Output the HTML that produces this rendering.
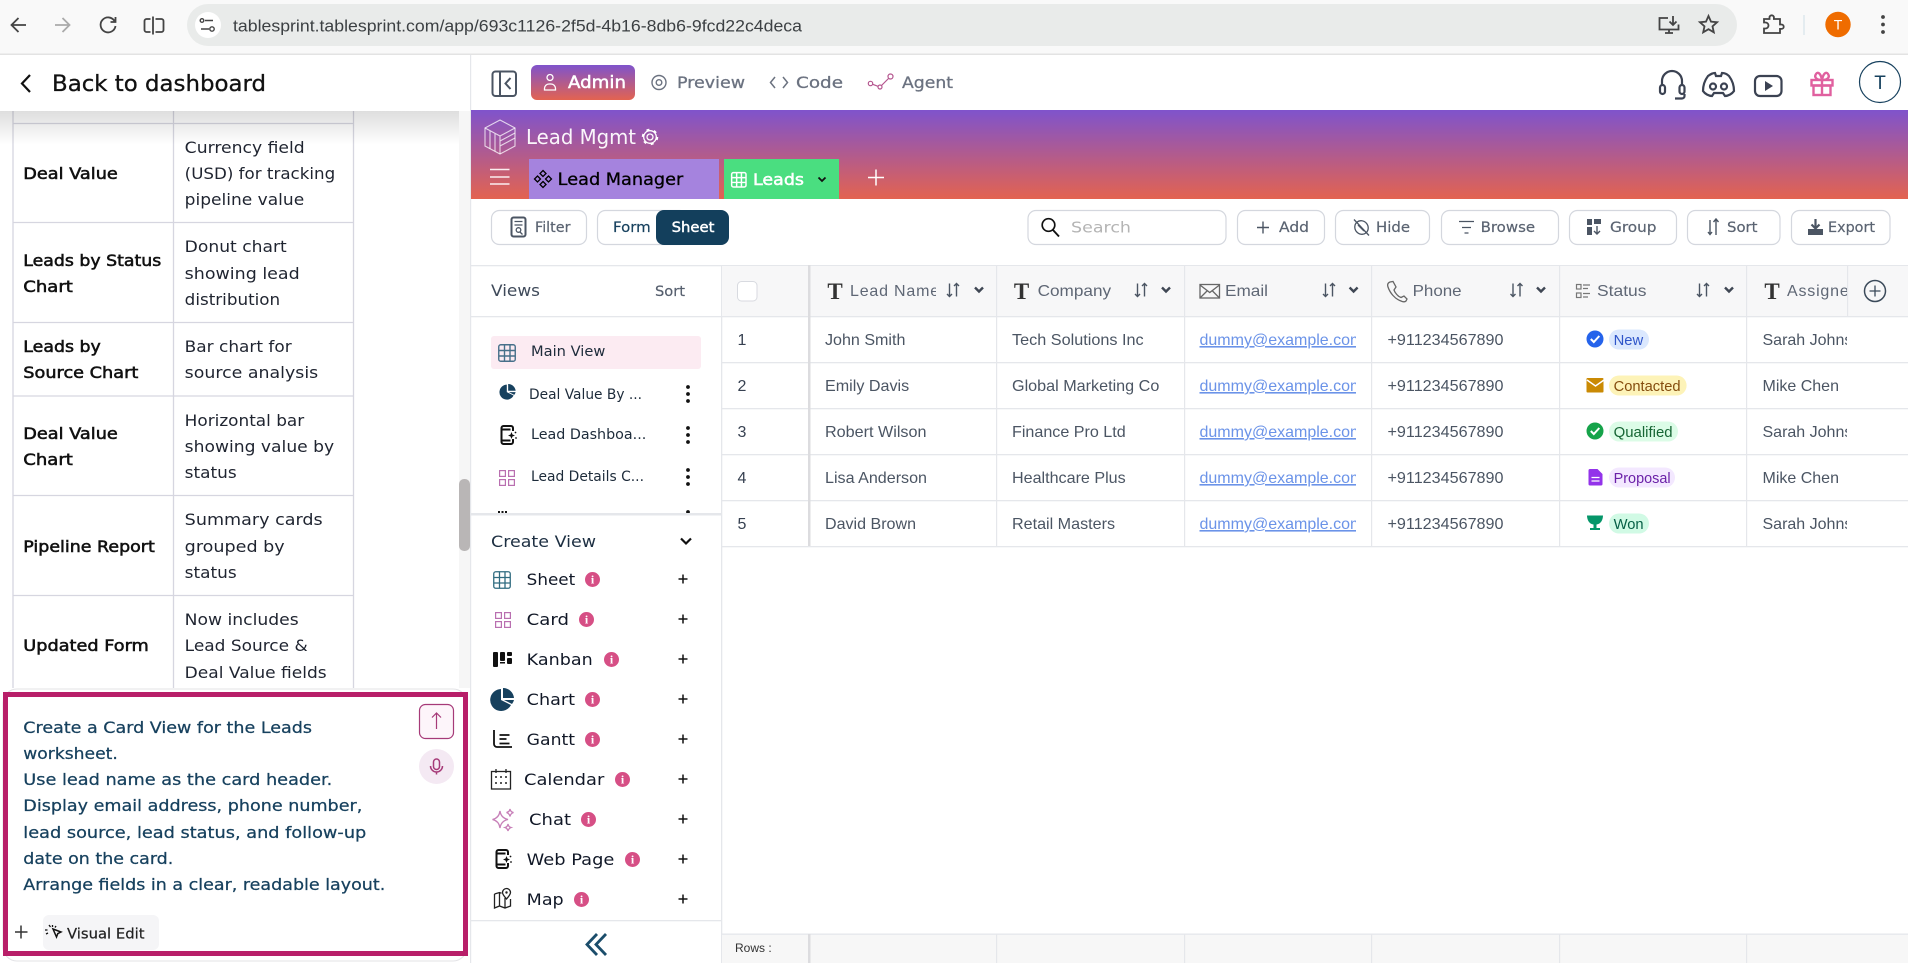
<!DOCTYPE html>
<html lang="en"><head><meta charset="utf-8"><title>Lead Mgmt</title>
<style>
html,body{margin:0;padding:0;background:#fff;width:1908px;height:963px;overflow:hidden}
svg{display:block}
text{white-space:pre}
.p{font-family:"DejaVu Sans",sans-serif;font-size:16px;fill:#1f2430}
.b{font-family:"DejaVu Sans",sans-serif;font-size:16px;fill:#111;stroke:#111;stroke-width:.55}
.q{font-family:"DejaVu Sans",sans-serif;font-size:16px;fill:#17415e;stroke:#17415e;stroke-width:.25}
.n{font-family:"DejaVu Sans",sans-serif;font-size:16px;fill:#6b7280;stroke:#6b7280;stroke-width:.3}
.t{font-family:"DejaVu Sans",sans-serif;font-size:14px;fill:#5b6472;stroke:#5b6472;stroke-width:.2}
.v{font-family:"DejaVu Sans",sans-serif;font-size:14px;fill:#1d2b3a}
.c{font-family:"DejaVu Sans",sans-serif;font-size:16px;fill:#111827}
.g{font-family:"Liberation Sans",sans-serif;font-size:16px;fill:#4b5563}
.h{font-family:"Liberation Sans",sans-serif;font-size:16px;fill:#5f6775;letter-spacing:.8px}
.T{font-family:"Liberation Serif",serif;font-size:23px;font-weight:bold;fill:#333;text-anchor:middle}
.l{font-family:"Liberation Sans",sans-serif;font-size:16px;fill:#6b93e8;text-decoration:underline}
.s{font-family:"Liberation Sans",sans-serif;font-size:14.5px}
.i{font-family:"Liberation Serif",serif;font-size:12px;font-weight:bold;fill:#fff;text-anchor:middle}
</style></head><body>
<svg xmlns="http://www.w3.org/2000/svg" width="1908" height="963" viewBox="0 0 1908 963">
<defs>
<linearGradient id="gr" x1="0" y1="0" x2="0" y2="1"><stop offset="0" stop-color="#7f53cc"/><stop offset="1" stop-color="#e36350"/></linearGradient>
<linearGradient id="sh" x1="0" y1="0" x2="0" y2="1"><stop offset="0" stop-color="#000" stop-opacity=".13"/><stop offset="1" stop-color="#000" stop-opacity="0"/></linearGradient>
<clipPath id="c1"><rect x="840" y="270" width="96" height="40"/></clipPath>
<clipPath id="c2"><rect x="1755" y="270" width="92" height="280"/></clipPath>
<clipPath id="c3"><rect x="1195" y="320" width="161" height="220"/></clipPath>
<clipPath id="c4"><rect x="472" y="500" width="248" height="13"/></clipPath>
<g id="grid" fill="none"><rect x=".75" y=".75" width="16.5" height="16.5" rx="2"/><path d="M6.5 1v16M12 1v16M1 6.5h16M1 12h16"/></g>
<g id="card" fill="none"><rect x=".6" y=".6" width="5.8" height="5.8"/><rect x="9.6" y=".6" width="5.8" height="5.8"/><rect x=".6" y="9.6" width="5.8" height="5.8"/><rect x="9.6" y="9.6" width="5.8" height="5.8"/></g>
<g id="pie"><path d="M10 12V1A11 11 0 1 0 20 17Z"/><path d="M12 0A11 11 0 0 1 23 10H12Z"/><path d="M13 12H23A11 11 0 0 1 21 16Z"/></g>
<g id="web"><path d="M12.5 6V3a2 2 0 0 0-2-2H3a2 2 0 0 0-2 2v14a2 2 0 0 0 2 2h7.5a2 2 0 0 0 2-2v-3M1 4.500h9M1 15.500h9" fill="none" stroke="#111" stroke-width="2"/><path d="M11 7l1 2.500 2.500 1-2.500 1-1 2.500-1-2.500-2.500-1 2.500-1z" fill="#111"/><circle cx="15" cy="7.500" r=".9" fill="#111"/><circle cx="15.500" cy="13" r=".9" fill="#111"/></g>
<g id="sa" fill="none" stroke="#4b5563" stroke-width="1.4"><path d="M-3.500 -6.500V6.500M-6 4l2.500 2.500L-1 4M3.500 6.500V-6.500M1 -4l2.500-2.500L6-4"/></g>
<path id="ch" d="M-4 -2.500L0 1.500L4 -2.500" fill="none" stroke="#3f4754" stroke-width="2.400"/>
<g id="dots" fill="#111"><circle cy="-7" r="1.900"/><circle r="1.900"/><circle cy="7" r="1.900"/></g>
<path id="pl" d="M-4.500 0H4.500M0 -4.500V4.500" stroke="#111" stroke-width="1.500" fill="none"/>
</defs>

<!-- browser bar -->
<rect width="1908" height="54" fill="#f9f9f9"/>
<rect y="53.500" width="1908" height="1.500" fill="#e3e3e3"/>
<rect x="187" y="4" width="1550" height="42" rx="21" fill="#e9ebea"/>
<circle cx="208" cy="25" r="13" fill="#fff"/>
<g fill="none" stroke="#444" stroke-width="1.800">
<path d="M26 25H12M18.500 18l-7 7 7 7"/>
<path d="M55 25H69M62.500 18l7 7-7 7" stroke="#aaa"/>
<path d="M114.500 21A7.500 7.500 0 1 0 115.500 26M115.500 17v5h-5"/>
<path d="M150.500 19h-4a2 2 0 0 0-2 2v9a2 2 0 0 0 2 2h4M153 16.500v18M155.500 19h6a2 2 0 0 1 2 2v9a2 2 0 0 1-2 2h-6" />
<path d="M1668 18h-8.500v11.500h19v-5M1665 33h8M1669 29.500V33M1673 16v9M1669.500 21.500l3.500 3.500 3.500-3.500"/>
<polygon points="1708.500,16 1711,21.600 1717.100,22.200 1712.500,26.300 1713.800,32.300 1708.500,29.200 1703.200,32.300 1704.500,26.300 1699.900,22.200 1706,21.600"/>
<path d="M1764 19h5.500v-1.500a2.200 2.200 0 0 1 4.400 0V19H1780v5.500h1.500a2.200 2.200 0 0 1 0 4.400H1780V33h-16v-4.500h1.500a3 3 0 0 0 0-6H1764z"/>
<path d="M205 20.500h8M201 29h8" stroke-width="1.500"/>
<circle cx="202" cy="20.500" r="1.800" stroke-width="1.400"/><circle cx="212" cy="29" r="2.200" stroke-width="1.400"/>
</g>
<rect x="1803.500" y="15" width="1" height="20" fill="#cfe0e8"/>
<circle cx="1838" cy="24.500" r="12.700" fill="#ef6c00"/>
<text x="1838" y="29.500" font-family="Liberation Sans" font-size="14" fill="#fff" text-anchor="middle">T</text>
<g fill="#444"><circle cx="1883" cy="17" r="1.900"/><circle cx="1883" cy="24.500" r="1.900"/><circle cx="1883" cy="32" r="1.900"/></g>
<text x="233" y="31.500" font-family="Liberation Sans" font-size="16.500" fill="#3c4043" textLength="569" lengthAdjust="spacingAndGlyphs">tablesprint.tablesprint.com/app/693c1126-2f5d-4b16-8db6-9fcd22c4deca</text>

<!-- left panel table -->
<rect x="459" y="111" width="11" height="577" fill="#f6f6f6"/>
<rect x="459" y="479" width="11" height="72" rx="5" fill="#b9b6b6"/>
<g stroke="#d6d6e0" stroke-width="1.300" fill="none">
<path d="M13 111V688M173.500 111V688M353.500 111V688"/>
<path d="M13 123.500H353.500M13 222.500H353.500M13 322.500H353.500M13 396H353.500M13 495.500H353.500M13 595.500H353.500"/>
</g>
<rect x="0" y="111" width="459" height="34" fill="url(#sh)"/>
<rect x="470" y="55" width="1.200" height="908" fill="#e5e7eb"/>

<text class="b" x="23.300" y="179" textLength="94.500" lengthAdjust="spacingAndGlyphs">Deal Value</text>
<text class="b" x="23.300" y="266" textLength="138" lengthAdjust="spacingAndGlyphs">Leads by Status</text>
<text class="b" x="23.300" y="292" textLength="49.500" lengthAdjust="spacingAndGlyphs">Chart</text>
<text class="b" x="23.300" y="352" textLength="77.500" lengthAdjust="spacingAndGlyphs">Leads by</text>
<text class="b" x="23.300" y="378" textLength="115" lengthAdjust="spacingAndGlyphs">Source Chart</text>
<text class="b" x="23.300" y="439" textLength="94.500" lengthAdjust="spacingAndGlyphs">Deal Value</text>
<text class="b" x="23.300" y="465" textLength="49.500" lengthAdjust="spacingAndGlyphs">Chart</text>
<text class="b" x="23.300" y="552" textLength="131.500" lengthAdjust="spacingAndGlyphs">Pipeline Report</text>
<text class="b" x="23.300" y="651" textLength="125.500" lengthAdjust="spacingAndGlyphs">Updated Form</text>

<text class="p" x="184.700" y="153" textLength="120" lengthAdjust="spacingAndGlyphs">Currency field</text>
<text class="p" x="184.700" y="179" textLength="150.500" lengthAdjust="spacingAndGlyphs">(USD) for tracking</text>
<text class="p" x="184.700" y="205" textLength="119.500" lengthAdjust="spacingAndGlyphs">pipeline value</text>
<text class="p" x="184.700" y="252" textLength="102" lengthAdjust="spacingAndGlyphs">Donut chart</text>
<text class="p" x="184.700" y="279" textLength="115" lengthAdjust="spacingAndGlyphs">showing lead</text>
<text class="p" x="184.700" y="305" textLength="95.500" lengthAdjust="spacingAndGlyphs">distribution</text>
<text class="p" x="184.700" y="352" textLength="107" lengthAdjust="spacingAndGlyphs">Bar chart for</text>
<text class="p" x="184.700" y="378" textLength="133.500" lengthAdjust="spacingAndGlyphs">source analysis</text>
<text class="p" x="184.700" y="426" textLength="119.500" lengthAdjust="spacingAndGlyphs">Horizontal bar</text>
<text class="p" x="184.700" y="452" textLength="149.500" lengthAdjust="spacingAndGlyphs">showing value by</text>
<text class="p" x="184.700" y="478" textLength="52" lengthAdjust="spacingAndGlyphs">status</text>
<text class="p" x="184.700" y="525" textLength="138" lengthAdjust="spacingAndGlyphs">Summary cards</text>
<text class="p" x="184.700" y="552" textLength="100" lengthAdjust="spacingAndGlyphs">grouped by</text>
<text class="p" x="184.700" y="578" textLength="52" lengthAdjust="spacingAndGlyphs">status</text>
<text class="p" x="184.700" y="625" textLength="114" lengthAdjust="spacingAndGlyphs">Now includes</text>
<text class="p" x="184.700" y="651" textLength="123" lengthAdjust="spacingAndGlyphs">Lead Source &amp;</text>
<text class="p" x="184.700" y="678" textLength="142" lengthAdjust="spacingAndGlyphs">Deal Value fields</text>

<!-- back header -->
<rect x="0" y="55" width="470" height="56" fill="#fff"/>
<path d="M30 75L22 83.500L30 92" fill="none" stroke="#111" stroke-width="2.200"/>
<text x="52" y="91" font-family="DejaVu Sans" font-size="22.500" fill="#111" textLength="214" lengthAdjust="spacingAndGlyphs" stroke="#111" stroke-width=".3">Back to dashboard</text>

<!-- prompt -->
<rect x="3" y="689" width="464" height="272" rx="14" fill="#fff" stroke="#e3e3e6"/>
<rect x="5.500" y="694.500" width="460" height="259" fill="#fff" stroke="#b81f69" stroke-width="5"/>
<text class="q" x="23.300" y="733" textLength="288.700" lengthAdjust="spacingAndGlyphs">Create a Card View for the Leads</text>
<text class="q" x="23.300" y="759" textLength="94.500" lengthAdjust="spacingAndGlyphs">worksheet.</text>
<text class="q" x="23.300" y="785" textLength="309" lengthAdjust="spacingAndGlyphs">Use lead name as the card header.</text>
<text class="q" x="23.300" y="811" textLength="339" lengthAdjust="spacingAndGlyphs">Display email address, phone number,</text>
<text class="q" x="23.300" y="838" textLength="343" lengthAdjust="spacingAndGlyphs">lead source, lead status, and follow-up</text>
<text class="q" x="23.300" y="864" textLength="150" lengthAdjust="spacingAndGlyphs">date on the card.</text>
<text class="q" x="23.300" y="890" textLength="362" lengthAdjust="spacingAndGlyphs">Arrange fields in a clear, readable layout.</text>
<rect x="419.500" y="704.500" width="34" height="34" rx="6" fill="#fdf5fa" stroke="#a63a78" stroke-width="1.200"/>
<path d="M436.500 729V713M432 717.500l4.500-4.500 4.500 4.500" fill="none" stroke="#a63a78" stroke-width="1.200"/>
<circle cx="436.500" cy="766.500" r="17.500" fill="#f4e9f3"/>
<rect x="433.500" y="759" width="6" height="10.500" rx="3" fill="none" stroke="#a63a78" stroke-width="1.500"/>
<path d="M430.500 766a6 6 0 0 0 12 0M436.500 772v2.500" fill="none" stroke="#a63a78" stroke-width="1.500"/>
<path d="M15 932H27.500M21 925.500V938.500" stroke="#333" stroke-width="1.500" fill="none"/>
<rect x="43" y="915" width="116" height="35" rx="6" fill="#f5f5f7"/>
<path d="M53 929l8 3-3.200 1.600L56.500 937z" fill="none" stroke="#111" stroke-width="1.500"/>
<path d="M49 925l1.500 2M45 930h2.500M52.500 925v2M46 934l2-1M56 926l-1 1.500" stroke="#111" stroke-width="1.300"/>
<text x="67" y="938.500" font-family="DejaVu Sans" font-size="14" fill="#222" textLength="77.500" lengthAdjust="spacingAndGlyphs" stroke="#222" stroke-width=".2">Visual Edit</text>

<!-- top nav -->
<rect x="492.500" y="71.500" width="23.500" height="24.500" rx="3" fill="none" stroke="#4b5563" stroke-width="2"/>
<path d="M500 72V96M510.500 78l-5 5.500 5 5.500" fill="none" stroke="#4b5563" stroke-width="2"/>
<rect x="531" y="65" width="104" height="35" rx="6" fill="url(#gr)"/>
<circle cx="550" cy="77.500" r="3" fill="none" stroke="#fff" stroke-width="1.300"/>
<path d="M544.500 90v-1.500a4.500 4.500 0 0 1 4.500-4.500h2a4.500 4.500 0 0 1 4.500 4.500V90z" fill="none" stroke="#fff" stroke-width="1.300"/>
<text x="568" y="88" font-family="DejaVu Sans" font-size="17" fill="#fff" stroke="#fff" stroke-width=".5" textLength="58" lengthAdjust="spacingAndGlyphs">Admin</text>
<circle cx="659" cy="82.500" r="7" fill="none" stroke="#6b7280" stroke-width="1.400"/><circle cx="659" cy="82.500" r="2.800" fill="none" stroke="#6b7280" stroke-width="1.400"/>
<text class="n" x="677" y="88" textLength="68" lengthAdjust="spacingAndGlyphs">Preview</text>
<path d="M775 77l-4.500 5.500 4.500 5.500M783 77l4.500 5.500-4.500 5.500" fill="none" stroke="#6b7280" stroke-width="1.500"/>
<text class="n" x="796" y="88" textLength="47" lengthAdjust="spacingAndGlyphs">Code</text>
<g fill="none" stroke="#b5568f" stroke-width="1.200"><circle cx="870.500" cy="83.500" r="2.200"/><circle cx="880" cy="87" r="2"/><circle cx="890.500" cy="76.500" r="2.500"/><path d="M872.700 84.300L878 86.300M881.500 85.500L888.500 78.500"/></g>
<text class="n" x="902" y="88" textLength="51" lengthAdjust="spacingAndGlyphs">Agent</text>

<g fill="none" stroke="#3b4252" stroke-width="2.200">
<path d="M1662 86v-5a10 10 0 0 1 20 0v5"/><rect x="1660" y="85" width="5" height="9" rx="2.500"/><rect x="1679.500" y="85" width="5" height="9" rx="2.500"/><path d="M1684.500 94v2a2.500 2.500 0 0 1-2.500 2.500h-7"/>
<path d="M1708 76Q1712 73 1715 73L1716 76H1721L1722 73Q1726 73 1729 76C1732 80 1734 85 1734 91C1732 94 1728 96 1725 96L1723 93H1714L1712 96C1709 96 1705 94 1703 91C1703 85 1705 80 1708 76Z"/>
<circle cx="1713" cy="86.500" r="3"/><circle cx="1724" cy="86.500" r="3"/>
<rect x="1755" y="76" width="26.500" height="20" rx="5"/>
</g>
<path d="M1765 81l8 5-8 5z" fill="#3b4252"/>
<g fill="none" stroke="#e0609f" stroke-width="2.400"><rect x="1811.500" y="80" width="21" height="5.500"/><rect x="1813.500" y="85.500" width="17" height="9.500"/><path d="M1822 80V95M1822 80c-6 0-8-3-6-6s5 0 6 6c1-6 4-9 6-6s0 6-6 6"/></g>
<circle cx="1880" cy="82" r="20.500" fill="#fff" stroke="#17415e" stroke-width="1.200"/>
<text x="1880" y="89" font-family="Liberation Sans" font-size="19" fill="#17415e" text-anchor="middle">T</text>

<!-- banner -->
<rect x="471" y="110" width="1437" height="89" fill="url(#gr)"/>
<g fill="none" stroke="#fff" stroke-opacity=".75" stroke-width="1.100"><path d="M500 120L515 128V146L500 154L485 146V128Z"/><path d="M485 128L500 136L515 128M500 136V154M490 131V149M495 133.500V151.500M500 146L515 138M500 141L515 133"/></g>
<text x="526" y="144" font-family="DejaVu Sans" font-size="20" fill="#fff" fill-opacity=".95" textLength="110" lengthAdjust="spacingAndGlyphs">Lead Mgmt</text>
<circle cx="650" cy="137" r="3" fill="none" stroke="#fff" stroke-width="1.300"/>
<circle cx="650" cy="137" r="6.300" fill="none" stroke="#fff" stroke-width="1.300"/>
<circle cx="650" cy="137" r="7.400" fill="none" stroke="#fff" stroke-width="1.700" stroke-dasharray="3 4.750"/>
<path d="M490 169.500H509.500M490 177H509.500M490 184H509.500" stroke="#fbeef0" stroke-width="1.600"/>
<rect x="529" y="159" width="190" height="40" fill="#a583de"/>
<path d="M543 170.500l3 3-3 3-3-3zM537.500 176l3 3-3 3-3-3zM548.500 176l3 3-3 3-3-3zM543 181.500l3 3-3 3-3-3z" fill="none" stroke="#000" stroke-width="1.300"/>
<text x="557.700" y="185" font-family="DejaVu Sans" font-size="17" fill="#000" stroke="#000" stroke-width=".3" textLength="125.600" lengthAdjust="spacingAndGlyphs">Lead Manager</text>
<rect x="724" y="159" width="115" height="40" fill="#4ade80"/>
<use href="#grid" transform="translate(731 172) scale(.87)" stroke="#fff" stroke-width="1.700"/>
<text x="753" y="185" font-family="DejaVu Sans" font-size="16" fill="#fff" stroke="#fff" stroke-width=".5" textLength="51" lengthAdjust="spacingAndGlyphs">Leads</text>
<path d="M818.500 177.500l3.500 3.500 3.500-3.500" fill="none" stroke="#111" stroke-width="1.800"/>
<path d="M868 177.500H884M876 169.500V185.500" stroke="#fff" stroke-width="1.500"/>

<!-- toolbar -->
<g fill="#fff" stroke="#d4d7de" stroke-width="1.200">
<rect x="491.500" y="210.500" width="95" height="34" rx="8"/>
<rect x="597.500" y="210.500" width="90" height="34" rx="8"/>
<rect x="1028" y="210.500" width="198" height="34" rx="8"/>
<rect x="1237.500" y="210.500" width="87" height="34" rx="8"/>
<rect x="1335.500" y="210.500" width="94" height="34" rx="8"/>
<rect x="1441.500" y="210.500" width="117" height="34" rx="8"/>
<rect x="1569.500" y="210.500" width="107" height="34" rx="8"/>
<rect x="1687.500" y="210.500" width="92.500" height="34" rx="8"/>
<rect x="1791.500" y="210.500" width="98.500" height="34" rx="8"/>
</g>
<rect x="656" y="210" width="73" height="35" rx="8" fill="#133f5c"/>
<rect x="511.500" y="217.500" width="14" height="19" rx="2" fill="none" stroke="#4b5563" stroke-width="2"/>
<path d="M514.500 221.500h8M514.500 225h8" stroke="#4b5563" stroke-width="1.300"/><circle cx="518.500" cy="230" r="2.300" fill="none" stroke="#4b5563" stroke-width="1.300"/><path d="M520 232l2.500 2.500" stroke="#4b5563" stroke-width="1.300"/>
<text class="t" x="535" y="232" textLength="35.500" lengthAdjust="spacingAndGlyphs">Filter</text>
<text class="t" x="613" y="232" style="fill:#17415e;stroke:#17415e" textLength="37.700" lengthAdjust="spacingAndGlyphs">Form</text>
<text x="671.700" y="232" font-family="DejaVu Sans" font-size="14" fill="#fff" stroke="#fff" stroke-width=".4" textLength="42.700" lengthAdjust="spacingAndGlyphs">Sheet</text>
<circle cx="1048.500" cy="225" r="6.300" fill="none" stroke="#111" stroke-width="1.700"/><path d="M1053 230l6 6.500" stroke="#111" stroke-width="1.900"/>
<text x="1071" y="232.500" font-family="DejaVu Sans" font-size="15" fill="#b4b4b4" textLength="60" lengthAdjust="spacingAndGlyphs">Search</text>
<path d="M1257 227.500H1269M1263 221.500V233.500" stroke="#4b5563" stroke-width="1.400"/>
<text class="t" x="1279" y="232" textLength="30" lengthAdjust="spacingAndGlyphs">Add</text>
<g fill="none" stroke="#4b5563" stroke-width="1.300"><ellipse cx="1361.500" cy="227.500" rx="6.500" ry="7" transform="rotate(-40 1361.500 227.500)"/><path d="M1354 219.500L1369 235.500M1358 225l6 6"/></g>
<text class="t" x="1376" y="232" textLength="34" lengthAdjust="spacingAndGlyphs">Hide</text>
<path d="M1459 221.500h15M1462 227.500h9M1464.500 233h4" stroke="#4b5563" stroke-width="1.300"/>
<text class="t" x="1480.600" y="232" textLength="54.500" lengthAdjust="spacingAndGlyphs">Browse</text>
<g fill="#4b5563"><rect x="1587" y="219" width="5" height="6"/><rect x="1587" y="227" width="5" height="8"/><rect x="1594" y="219" width="7" height="5"/></g><path d="M1597 226v8M1594 231l3 3 3-3" fill="none" stroke="#4b5563" stroke-width="1.400"/>
<text class="t" x="1610" y="232" textLength="46.500" lengthAdjust="spacingAndGlyphs">Group</text>
<path d="M1710 220v14.500M1708 232l2 2.500 2-2.500M1716 235V219M1713.500 222l2.500-3 2.500 3" fill="none" stroke="#4b5563" stroke-width="1.400"/>
<text class="t" x="1727" y="232" textLength="30.500" lengthAdjust="spacingAndGlyphs">Sort</text>
<rect x="1808" y="229" width="15" height="6" fill="#4b5563"/><path d="M1815.500 219v9M1811.500 224.500l4 4 4-4" fill="none" stroke="#4b5563" stroke-width="2.200"/>
<text class="t" x="1828" y="232" textLength="47" lengthAdjust="spacingAndGlyphs">Export</text>

<!-- views panel -->
<rect x="471" y="265" width="1437" height="1.300" fill="#e5e7eb"/>
<rect x="471" y="316" width="250" height="1.300" fill="#e5e7eb"/>
<rect x="721" y="265" width="1.300" height="698" fill="#e5e7eb"/>
<text x="491" y="296" font-family="DejaVu Sans" font-size="16" fill="#3f4a5a" textLength="49" lengthAdjust="spacingAndGlyphs">Views</text>
<text x="655" y="296" font-family="DejaVu Sans" font-size="14" fill="#565f6e" stroke="#565f6e" stroke-width=".2" textLength="30" lengthAdjust="spacingAndGlyphs">Sort</text>
<rect x="491" y="336" width="210" height="33" rx="3" fill="#fcebf2"/>
<use href="#grid" transform="translate(498 344)" stroke="#47708a" stroke-width="1.400"/>
<text class="v" x="531" y="356" textLength="74.300" lengthAdjust="spacingAndGlyphs">Main View</text>
<use href="#pie" transform="translate(500 384) scale(.68)" fill="#17415e"/>
<text class="v" x="529" y="399" textLength="113" lengthAdjust="spacingAndGlyphs">Deal Value By ...</text>
<use href="#dots" transform="translate(688 394)"/>
<use href="#web" transform="translate(500.500 425)"/>
<text class="v" x="531" y="439" textLength="115.300" lengthAdjust="spacingAndGlyphs">Lead Dashboa...</text>
<use href="#dots" transform="translate(688 435)"/>
<use href="#card" transform="translate(499 470)" stroke="#b96fb0" stroke-width="1.200"/>
<text class="v" x="531" y="481" textLength="113" lengthAdjust="spacingAndGlyphs">Lead Details C...</text>
<use href="#dots" transform="translate(688 477)"/>
<g clip-path="url(#c4)"><path d="M498 512h10" stroke="#111" stroke-width="2" stroke-dasharray="2 1.500"/><circle cx="688" cy="512" r="1.900" fill="#111"/></g>
<rect x="471" y="513" width="250" height="2.500" fill="#e5e7eb"/>
<text class="c" x="491" y="547" style="fill:#1d2f42" textLength="105" lengthAdjust="spacingAndGlyphs">Create View</text>
<path d="M681 538.500l5 5 5-5" fill="none" stroke="#111" stroke-width="2.200"/>

<use href="#grid" transform="translate(493 571)" stroke="#2f6b80" stroke-width="1.300"/>
<text class="c" x="526.700" y="585" textLength="48.500" lengthAdjust="spacingAndGlyphs">Sheet</text>
<use href="#card" transform="translate(495 612)" stroke="#b96fb0" stroke-width="1.200"/>
<text class="c" x="526.700" y="625" textLength="42.300" lengthAdjust="spacingAndGlyphs">Card</text>
<g fill="#111"><rect x="493" y="652" width="5" height="15" rx="1"/><rect x="500" y="652" width="5" height="9" rx="1"/><rect x="507" y="652" width="5" height="4" rx="1"/><rect x="507" y="658" width="5" height="6" rx="1"/><rect x="500" y="662" width="5" height="1.500"/></g>
<text class="c" x="526.700" y="665" textLength="66" lengthAdjust="spacingAndGlyphs">Kanban</text>
<use href="#pie" transform="translate(491 688)" fill="#17415e"/>
<text class="c" x="526.700" y="705" textLength="48.300" lengthAdjust="spacingAndGlyphs">Chart</text>
<path d="M494 730v14a3 3 0 0 0 3 3h15M499.500 735h10M499.500 739h7M499.500 743.500h10" fill="none" stroke="#111" stroke-width="1.800"/>
<text class="c" x="526.700" y="745" textLength="48.300" lengthAdjust="spacingAndGlyphs">Gantt</text>
<rect x="491.500" y="771.500" width="19" height="17.500" fill="none" stroke="#222" stroke-width="1.300"/>
<path d="M496 769v4M506 769v4" stroke="#222" stroke-width="1.300"/>
<g fill="#222"><circle cx="496" cy="777" r="1"/><circle cx="501" cy="777" r="1"/><circle cx="506" cy="777" r="1"/><circle cx="496" cy="783" r="1"/><circle cx="501" cy="783" r="1"/><circle cx="506" cy="783" r="1"/></g>
<text class="c" x="524" y="785" textLength="80.300" lengthAdjust="spacingAndGlyphs">Calendar</text>
<g fill="none" stroke="#c77fb8" stroke-width="1.300"><path d="M500 811Q501 818 508 819.500Q501 821 500 828Q499 821 492.500 819.500Q499 818 500 811Z"/><path d="M510 809Q510.500 812 513.500 812.500Q510.500 813.500 510 816.500Q509.500 813.500 506.500 812.500Q509.500 812 510 809Z"/><path d="M508 824Q508.500 827 511 827.500Q508.500 828.500 508 831Q507.500 828.500 505 827.500Q507.500 827 508 824Z"/></g>
<text class="c" x="529" y="825" textLength="42" lengthAdjust="spacingAndGlyphs">Chat</text>
<use href="#web" transform="translate(495.500 849)"/>
<text class="c" x="526.700" y="865" textLength="87.700" lengthAdjust="spacingAndGlyphs">Web Page</text>
<path d="M494.500 894v14l5-2 5.500 2 5.500-2v-7M499.500 893v13M505 898v10M494.500 894l5-1.500 2 .7" fill="none" stroke="#222" stroke-width="1.300"/><path d="M506.500 899c-2.500-3-4-4.500-4-6.500a4 4 0 0 1 8 0c0 2-1.500 3.500-4 6.500z" fill="#fff" stroke="#222" stroke-width="1.300"/><circle cx="506.500" cy="892.500" r="1.200" fill="#222"/>
<text class="c" x="526.700" y="905" textLength="37" lengthAdjust="spacingAndGlyphs">Map</text>
<g fill="#d64f85"><circle cx="592.500" cy="579.500" r="7.500"/><circle cx="586.500" cy="619.500" r="7.500"/><circle cx="611.500" cy="659.500" r="7.500"/><circle cx="592.500" cy="699.500" r="7.500"/><circle cx="592.500" cy="739.500" r="7.500"/><circle cx="622.500" cy="779.500" r="7.500"/><circle cx="588.500" cy="819.500" r="7.500"/><circle cx="632.500" cy="859.500" r="7.500"/><circle cx="581.500" cy="899.500" r="7.500"/></g>
<text class="i" x="592.500" y="583.500">i</text><text class="i" x="586.500" y="623.500">i</text><text class="i" x="611.500" y="663.500">i</text><text class="i" x="592.500" y="703.500">i</text><text class="i" x="592.500" y="743.500">i</text><text class="i" x="622.500" y="783.500">i</text><text class="i" x="588.500" y="823.500">i</text><text class="i" x="632.500" y="863.500">i</text><text class="i" x="581.500" y="903.500">i</text>
<use href="#pl" transform="translate(683 579)"/><use href="#pl" transform="translate(683 619)"/><use href="#pl" transform="translate(683 659)"/><use href="#pl" transform="translate(683 699)"/><use href="#pl" transform="translate(683 739)"/><use href="#pl" transform="translate(683 779)"/><use href="#pl" transform="translate(683 819)"/><use href="#pl" transform="translate(683 859)"/><use href="#pl" transform="translate(683 899)"/>
<rect x="471" y="920" width="250" height="1.300" fill="#e5e7eb"/>
<path d="M597 934L587 944.500L597 955M606 934L596 944.500L606 955" fill="none" stroke="#1b4d6b" stroke-width="2.800"/>

<!-- grid -->
<rect x="722" y="266" width="1186" height="50" fill="#f7f7f8"/>
<rect x="722" y="934" width="1186" height="29" fill="#f7f7f7"/>
<rect x="722" y="933.500" width="1186" height="1.300" fill="#e5e7eb"/>
<g fill="#e5e7eb">
<rect x="722" y="316" width="1186" height="1.300"/><rect x="722" y="362" width="1186" height="1.300"/><rect x="722" y="408" width="1186" height="1.300"/><rect x="722" y="454" width="1186" height="1.300"/><rect x="722" y="500" width="1186" height="1.300"/><rect x="722" y="546" width="1186" height="1.300"/>
<rect x="996" y="265" width="1.200" height="281"/><rect x="1184" y="265" width="1.200" height="281"/><rect x="1371" y="265" width="1.200" height="281"/><rect x="1559" y="265" width="1.200" height="281"/><rect x="1746" y="265" width="1.200" height="281"/><rect x="1847" y="265" width="1.200" height="51"/>
<rect x="996" y="934" width="1.200" height="29"/><rect x="1184" y="934" width="1.200" height="29"/><rect x="1371" y="934" width="1.200" height="29"/><rect x="1559" y="934" width="1.200" height="29"/><rect x="1746" y="934" width="1.200" height="29"/>
</g>
<rect x="808" y="265" width="2.500" height="281" fill="#dcdcdf"/>
<rect x="808" y="934" width="2.500" height="29" fill="#dcdcdf"/>
<rect x="737.500" y="281.500" width="19.500" height="19.500" rx="4" fill="#fff" stroke="#d8dae0"/>

<text class="T" x="835" y="299">T</text>
<text class="h" x="850" y="296" clip-path="url(#c1)">Lead Name</text>
<use href="#sa" transform="translate(953 290)"/><use href="#ch" transform="translate(979 290)"/>
<text class="T" x="1021.500" y="299">T</text>
<text class="h" x="1037.600" y="296" textLength="73.500" lengthAdjust="spacingAndGlyphs" style="letter-spacing:0">Company</text>
<use href="#sa" transform="translate(1141 290)"/><use href="#ch" transform="translate(1166 290)"/>
<g fill="none" stroke="#666" stroke-width="1.300"><rect x="1200" y="284.500" width="19.500" height="13.500"/><path d="M1200 285l9.750 7.500 9.750-7.500M1200 298l7-7M1219.500 298l-7-7"/></g>
<text class="h" x="1225" y="296" textLength="43" lengthAdjust="spacingAndGlyphs" style="letter-spacing:0">Email</text>
<use href="#sa" transform="translate(1329 290)"/><use href="#ch" transform="translate(1353.600 290)"/>
<path d="M1390 282l3-.5 3 5.500-2 3c1 3 4 6.500 7 7.500l3-1.500 3 3-1 2c-1 1-3 1-5 0-6-2-11-8-13-14-.7-2-.5-4 2-5z" fill="none" stroke="#666" stroke-width="1.300"/>
<text class="h" x="1412.600" y="296" textLength="49" lengthAdjust="spacingAndGlyphs" style="letter-spacing:0">Phone</text>
<use href="#sa" transform="translate(1516.500 290)"/><use href="#ch" transform="translate(1541 290)"/>
<g fill="none" stroke="#777" stroke-width="1.200"><rect x="1576.500" y="284.500" width="4.500" height="4.500"/><rect x="1576.500" y="293" width="4.500" height="4.500"/><path d="M1583 285h7M1583 288.500h5M1583 293.500h7M1583 297h5"/></g>
<text class="h" x="1597" y="296" textLength="49.500" lengthAdjust="spacingAndGlyphs" style="letter-spacing:0">Status</text>
<use href="#sa" transform="translate(1703 290)"/><use href="#ch" transform="translate(1729 290)"/>
<text class="T" x="1772" y="299">T</text>
<text class="h" x="1787" y="296" clip-path="url(#c2)">Assignee</text>
<circle cx="1875" cy="291" r="10.500" fill="none" stroke="#3b4a5a" stroke-width="1.500"/><path d="M1869.500 291H1880.500M1875 285.500V296.500" stroke="#3b4a5a" stroke-width="1.300"/>

<text class="g" x="737.500" y="345" style="fill:#374151">1</text>
<text class="g" x="737.500" y="391" style="fill:#374151">2</text>
<text class="g" x="737.500" y="437" style="fill:#374151">3</text>
<text class="g" x="737.500" y="483" style="fill:#374151">4</text>
<text class="g" x="737.500" y="529" style="fill:#374151">5</text>
<text class="g" x="825" y="345" textLength="80.400" lengthAdjust="spacingAndGlyphs">John Smith</text>
<text class="g" x="825" y="391" textLength="84.200" lengthAdjust="spacingAndGlyphs">Emily Davis</text>
<text class="g" x="825" y="437" textLength="101.500" lengthAdjust="spacingAndGlyphs">Robert Wilson</text>
<text class="g" x="825" y="483" textLength="102" lengthAdjust="spacingAndGlyphs">Lisa Anderson</text>
<text class="g" x="825" y="529" textLength="91" lengthAdjust="spacingAndGlyphs">David Brown</text>
<text class="g" x="1012" y="345" textLength="131.600" lengthAdjust="spacingAndGlyphs">Tech Solutions Inc</text>
<text class="g" x="1012" y="391" textLength="147.300" lengthAdjust="spacingAndGlyphs">Global Marketing Co</text>
<text class="g" x="1012" y="437" textLength="113.700" lengthAdjust="spacingAndGlyphs">Finance Pro Ltd</text>
<text class="g" x="1012" y="483" textLength="113.700" lengthAdjust="spacingAndGlyphs">Healthcare Plus</text>
<text class="g" x="1012" y="529" textLength="103" lengthAdjust="spacingAndGlyphs">Retail Masters</text>
<g clip-path="url(#c3)">
<text class="l" x="1199.500" y="345">dummy@example.com</text>
<text class="l" x="1199.500" y="391">dummy@example.com</text>
<text class="l" x="1199.500" y="437">dummy@example.com</text>
<text class="l" x="1199.500" y="483">dummy@example.com</text>
<text class="l" x="1199.500" y="529">dummy@example.com</text>
</g>
<text class="g" x="1387.500" y="345" textLength="116" lengthAdjust="spacingAndGlyphs">+911234567890</text>
<text class="g" x="1387.500" y="391" textLength="116" lengthAdjust="spacingAndGlyphs">+911234567890</text>
<text class="g" x="1387.500" y="437" textLength="116" lengthAdjust="spacingAndGlyphs">+911234567890</text>
<text class="g" x="1387.500" y="483" textLength="116" lengthAdjust="spacingAndGlyphs">+911234567890</text>
<text class="g" x="1387.500" y="529" textLength="116" lengthAdjust="spacingAndGlyphs">+911234567890</text>

<circle cx="1595" cy="339" r="8.500" fill="#2563eb"/><path d="M1590.800 339l3 3 5.500-6" fill="none" stroke="#fff" stroke-width="2"/>
<rect x="1609" y="329.500" width="40" height="20" rx="10" fill="#dbe8fe"/>
<text class="s" x="1613.600" y="345" fill="#2f55c9" textLength="29.600" lengthAdjust="spacingAndGlyphs">New</text>
<rect x="1586.500" y="378" width="17" height="14.500" rx="1" fill="#ca8a04"/><path d="M1587 380l8.500 6 8.500-6" fill="none" stroke="#fff" stroke-width="1.500"/>
<rect x="1609" y="375.500" width="77.600" height="20" rx="10" fill="#fdf3b8"/>
<text class="s" x="1613.600" y="391" fill="#854d0e" textLength="67" lengthAdjust="spacingAndGlyphs">Contacted</text>
<circle cx="1595" cy="431" r="8.500" fill="#16a34a"/><path d="M1590.800 431l3 3 5.500-6" fill="none" stroke="#fff" stroke-width="2"/>
<rect x="1609" y="421.500" width="69" height="20" rx="10" fill="#dcfce7"/>
<text class="s" x="1613.600" y="437" fill="#166534" textLength="59" lengthAdjust="spacingAndGlyphs">Qualified</text>
<path d="M1590 469h7.500l5 5v10a1.500 1.500 0 0 1-1.500 1.500h-11a1.500 1.500 0 0 1-1.500-1.500v-13.500a1.500 1.500 0 0 1 1.500-1.500z" fill="#9333ea"/><path d="M1591.500 477.500h8M1591.500 481h8" stroke="#fff" stroke-width="1.300"/>
<rect x="1609" y="467.500" width="66" height="20" rx="10" fill="#f3e8ff"/>
<text class="s" x="1613.600" y="483" fill="#6b21a8" textLength="57" lengthAdjust="spacingAndGlyphs">Proposal</text>
<path d="M1587 515.500h16c0 4-2 8.500-6.500 9v3.500h3.500v2h-10v-2h3.500v-3.500c-4.500-.5-6.500-5-6.500-9z" fill="#059669"/>
<rect x="1609" y="513.500" width="40" height="20" rx="10" fill="#d1fae5"/>
<text class="s" x="1613.600" y="529" fill="#065f46" textLength="30" lengthAdjust="spacingAndGlyphs">Won</text>

<g clip-path="url(#c2)">
<text class="g" x="1762.500" y="345">Sarah Johnson</text>
<text class="g" x="1762.500" y="391">Mike Chen</text>
<text class="g" x="1762.500" y="437">Sarah Johnson</text>
<text class="g" x="1762.500" y="483">Mike Chen</text>
<text class="g" x="1762.500" y="529">Sarah Johnson</text>
</g>
<text x="735" y="952" font-family="Liberation Sans" font-size="12" fill="#333">Rows :</text>
</svg>
</body></html>
